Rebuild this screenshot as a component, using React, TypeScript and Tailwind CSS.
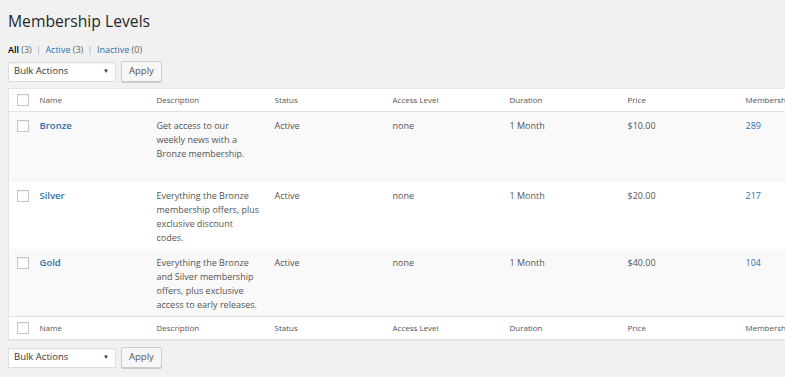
import React from 'react';

interface Level {
  name: string;
  description: string[];
  access: string;
  duration: string;
  price: string;
  members: string;
  height: string;
  bg: string;
}

// description lines are kept as in the listing, so they break at the same words
const levels: Level[] = [
  {
    name: 'Bronze',
    description: ['Get access to our', 'weekly news with a', 'Bronze membership.'],
    access: 'none',
    duration: '1 Month',
    price: '$10.00',
    members: '289',
    height: 'h-[70px]',
    bg: 'bg-[#f9f9f9]',
  },
  {
    name: 'Silver',
    description: ['Everything the Bronze', 'membership offers, plus', 'exclusive discount', 'codes.'],
    access: 'none',
    duration: '1 Month',
    price: '$20.00',
    members: '217',
    height: 'h-[67px]',
    bg: 'bg-white',
  },
  {
    name: 'Gold',
    description: ['Everything the Bronze', 'and Silver membership', 'offers, plus exclusive', 'access to early releases.'],
    access: 'none',
    duration: '1 Month',
    price: '$40.00',
    members: '104',
    height: 'h-[68px]',
    bg: 'bg-[#f9f9f9]',
  },
];

const columns = ['Name', 'Description', 'Status', 'Access Level', 'Duration', 'Price', 'Memberships'];

function Checkbox() {
  return <span className="block w-[12px] h-[12px] border border-[#c4c7ca] bg-white shadow-[inset_0_1px_1px_rgba(0,0,0,0.06)]" />;
}

function BulkActions() {
  return (
    <div className="flex items-center gap-[5px]">
      <div className="flex items-center justify-between w-[108px] h-[20px] pl-[5px] pr-[6px] bg-white border border-[#ddd] shadow-[inset_0_1px_1px_rgba(0,0,0,0.05)] text-[9.5px] text-[#32373c]">
        <span>Bulk Actions</span>
        <span className="text-[6px] text-[#333]">▼</span>
      </div>
      <button className="h-[21px] px-[7px] bg-[#f7f7f7] border border-[#ccc] rounded-[2px] shadow-[0_1px_0_#ccc] text-[9.5px] text-[#555]">
        Apply
      </button>
    </div>
  );
}

function HeaderRow({ top }: { top?: boolean }) {
  return (
    <tr className={`h-[23px] bg-white ${top ? 'border-b' : 'border-t'} border-[#e1e1e1]`}>
      <td className="pl-[8px]">
        <Checkbox />
      </td>
      {columns.map((c) => (
        <td key={c} className="pl-[8px] text-[8px] text-[#555] whitespace-nowrap">
          {c}
        </td>
      ))}
    </tr>
  );
}

export default function App() {
  return (
    <div
      className="w-[785px] h-[377px] overflow-hidden bg-[#f1f1f1] pl-[8px] pt-[11px]"
      style={{ fontFamily: '"Open Sans", "Noto Sans", sans-serif' }}
    >
      <h1 className="text-[15.7px] leading-[20px] text-[#23282d]">Membership Levels</h1>

      <div className="mt-[13px] text-[9px] leading-[12px] text-[#666]">
        <span className="font-semibold text-[#000]">All</span> (3) <span className="text-[#aaa] mx-[2px]">|</span>{' '}
        <span className="text-[#2a73ad]">Active</span> (3) <span className="text-[#aaa] mx-[2px]">|</span>{' '}
        <span className="text-[#2a73ad]">Inactive</span> (0)
      </div>

      <div className="mt-[5px]">
        <BulkActions />
      </div>

      <table className="mt-[6px] w-[850px] table-fixed border-collapse bg-white border border-[#e5e5e5] shadow-[0_1px_1px_rgba(0,0,0,0.04)]">
        <colgroup>
          <col className="w-[23px]" />
          <col className="w-[117px]" />
          <col className="w-[118px]" />
          <col className="w-[118px]" />
          <col className="w-[117px]" />
          <col className="w-[118px]" />
          <col className="w-[118px]" />
          <col />
        </colgroup>
        <thead>
          <HeaderRow top />
        </thead>
        <tbody>
          {levels.map((l) => (
            <tr key={l.name} className={`${l.height} ${l.bg} align-top text-[9px] leading-[14px] text-[#555]`}>
              <td className="pl-[8px] pt-[8px]">
                <Checkbox />
              </td>
              <td className="pl-[8px] pt-[7px] text-[9.5px] font-semibold text-[#2a73ad]">{l.name}</td>
              <td className="pl-[8px] pt-[7px]">
                {l.description.map((line) => (
                  <span key={line} className="block whitespace-nowrap">
                    {line}
                  </span>
                ))}
              </td>
              <td className="pl-[8px] pt-[7px]">Active</td>
              <td className="pl-[8px] pt-[7px]">{l.access}</td>
              <td className="pl-[8px] pt-[7px]">{l.duration}</td>
              <td className="pl-[8px] pt-[7px]">{l.price}</td>
              <td className="pl-[8px] pt-[7px] text-[#2a73ad]">{l.members}</td>
            </tr>
          ))}
        </tbody>
        <tfoot>
          <HeaderRow />
        </tfoot>
      </table>

      <div className="mt-[7px]">
        <BulkActions />
      </div>
    </div>
  );
}
